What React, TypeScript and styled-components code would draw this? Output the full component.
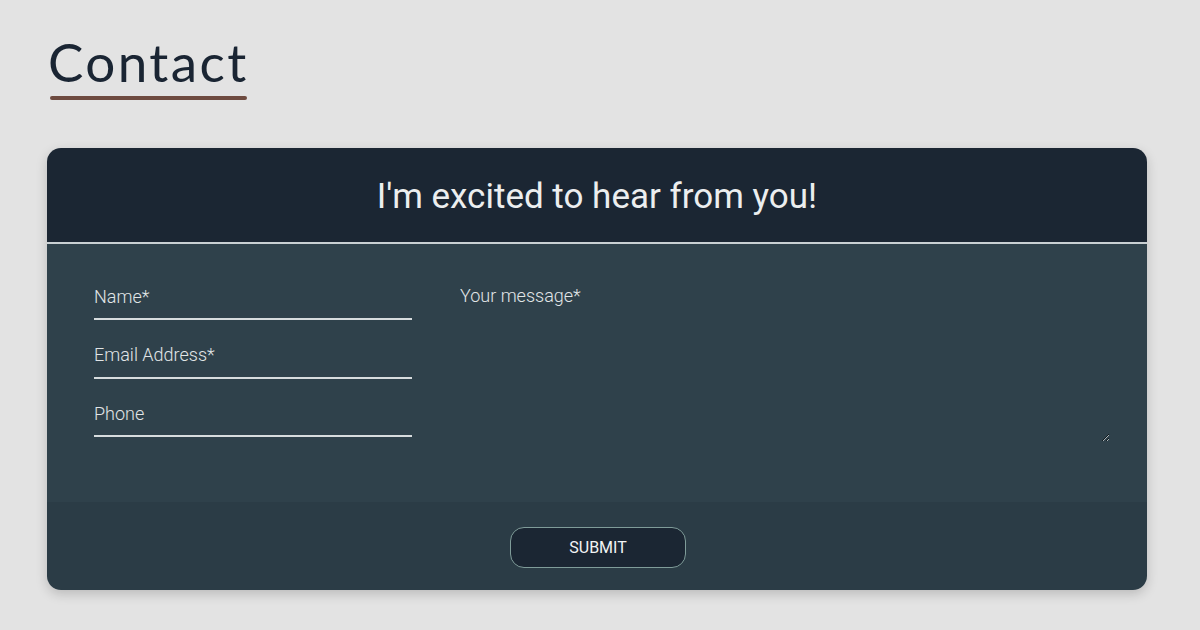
import React from "react";
import styled, { createGlobalStyle } from "styled-components";

const Global = createGlobalStyle`
  html, body { margin: 0; padding: 0; background: #e3e3e3; }
  body { font-family: "Open Sans", sans-serif; }
  * { box-sizing: border-box; }
`;

const Page = styled.div`
  width: 1200px;
  height: 630px;
  padding: 36px 53px 0 47px;
  background: #e3e3e3;
`;

const Title = styled.h1`
  margin: 0 0 0 1px;
  display: inline-block;
  font-family: "Lato", "Open Sans", sans-serif;
  font-weight: 400;
  font-size: 53px;
  line-height: 52px;
  color: #1a2533;
  letter-spacing: 2.4px;
`;

const Underline = styled.div`
  width: 197px;
  height: 4px;
  margin: 8px 0 0 3px;
  border-radius: 2px;
  background: #6e4b40;
`;

const Card = styled.form`
  margin-top: 48px;
  width: 1100px;
  border-radius: 14px;
  overflow: hidden;
  box-shadow: 0 4px 12px rgba(0, 0, 0, 0.18);
  display: flex;
  flex-direction: column;
`;

const Header = styled.div`
  height: 96px;
  background: #1b2633;
  border-bottom: 2px solid #c9d0d3;
  display: flex;
  align-items: center;
  justify-content: center;
`;

const Heading = styled.h2`
  margin: 0;
  font-family: "Roboto", sans-serif;
  font-weight: 400;
  font-size: 35px;
  color: #eceeef;
  letter-spacing: 0;
  transform: translateY(1px);
`;

const Body = styled.div`
  height: 258px;
  background: #2f414b;
  padding: 38px 37px 0 47px;
  display: grid;
  grid-template-columns: 318px 1fr;
  column-gap: 48px;
`;

const Fields = styled.div`
  display: flex;
  flex-direction: column;
  gap: 20.5px;
`;

const Field = styled.input`
  width: 318px;
  height: 38px;
  padding: 0 0 8px 0;
  background: transparent;
  border: none;
  border-bottom: 2px solid #d7dcde;
  color: #e4e8ea;
  font-family: "Roboto", sans-serif;
  font-size: 18px;
  font-weight: 300;
  outline: none;
  &::placeholder {
    color: #e1e5e7;
    opacity: 1;
  }
`;

const Message = styled.textarea`
  height: 157px;
  margin-top: 3px;
  padding: 0;
  background: transparent;
  border: none;
  color: #e4e8ea;
  font-family: "Roboto", sans-serif;
  font-size: 18px;
  font-weight: 300;
  outline: none;
  resize: vertical;
  &::placeholder {
    color: #e1e5e7;
    opacity: 1;
  }
`;

const Footer = styled.div`
  height: 88px;
  padding-top: 2px;
  background: #2b3c46;
  display: flex;
  align-items: center;
  justify-content: center;
`;

const Submit = styled.button`
  width: 176px;
  height: 41px;
  margin-left: 2px;
  border-radius: 14px;
  background: #1b2633;
  border: 1.5px solid #7f9c99;
  color: #f2f4f5;
  font-family: "Roboto", sans-serif;
  font-size: 16px;
  font-weight: 400;
  letter-spacing: 0;
  cursor: pointer;
`;

export default function App() {
  return (
    <Page>
      <Global />
      <Title>Contact</Title>
      <Underline />
      <Card onSubmit={(e) => e.preventDefault()}>
        <Header>
          <Heading>I'm excited to hear from you!</Heading>
        </Header>
        <Body>
          <Fields>
            <Field placeholder="Name*" />
            <Field placeholder="Email Address*" />
            <Field placeholder="Phone" />
          </Fields>
          <Message placeholder="Your message*" />
        </Body>
        <Footer>
          <Submit type="submit">SUBMIT</Submit>
        </Footer>
      </Card>
    </Page>
  );
}
